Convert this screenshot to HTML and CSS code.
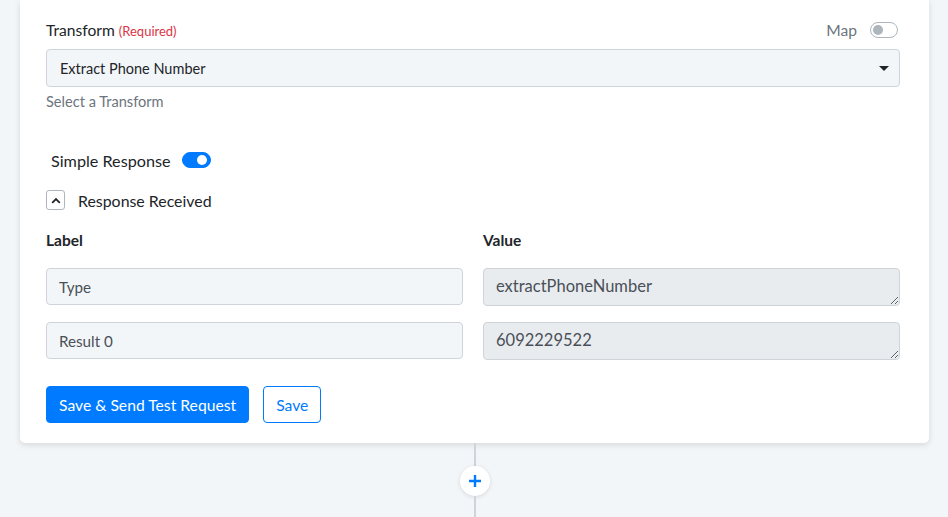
FILE: index.html
```html
<!DOCTYPE html>
<html lang="en">
<head>
    <meta charset="UTF-8">
    <meta name="viewport" content="width=device-width, initial-scale=1.0">
    <title>Transform Step</title>
    <link rel="stylesheet" href="styles.css">
</head>
<body>
    <div class="page">
        <div class="step-card">
            <div class="field-head">
                <label class="field-label">Transform <span class="required">(Required)</span></label>
                <div class="map-switch">
                    <span>Map</span>
                    <span class="toggle"></span>
                </div>
            </div>

            <div class="select-box">
                <span>Extract Phone Number</span>
                <span class="caret"></span>
            </div>
            <div class="help-text">Select a Transform</div>

            <div class="simple-row">
                <span>Simple Response</span>
                <span class="toggle on"></span>
            </div>

            <div class="collapse-row">
                <span class="collapse-btn">
                    <svg width="10" height="7" viewBox="0 0 10 7"><path d="M1.2 5.8 L5 2 L8.8 5.8" fill="none" stroke="#212529" stroke-width="1.8"/></svg>
                </span>
                <span>Response Received</span>
            </div>

            <div class="response-grid">
                <div class="col-title">Label</div>
                <div class="col-title">Value</div>

                <input class="cell" type="text" value="Type" readonly>
                <textarea class="cell value" rows="1" readonly>extractPhoneNumber</textarea>

                <input class="cell" type="text" value="Result 0" readonly>
                <textarea class="cell value" rows="1" readonly>6092229522</textarea>
            </div>

            <div class="actions">
                <button class="btn primary">Save &amp; Send Test Request</button>
                <button class="btn outline">Save</button>
            </div>
        </div>

        <div class="connector">
            <span class="line top"></span>
            <span class="add-step">
                <svg width="14" height="14" viewBox="0 0 14 14"><path d="M7 1 V13 M1 7 H13" stroke="#007bff" stroke-width="2.4"/></svg>
            </span>
            <span class="line"></span>
        </div>
    </div>
</body>
</html>
```

FILE: styles.css
```css
body {
    margin: 0;
    background-color: #f3f6f9;
    font-family: Lato, 'Open Sans', sans-serif;
    color: #212529;
}
.page {
    width: 909px;
    margin-left: 20px;
}
.step-card {
    background: white;
    padding: 20px 29px 20px 26px;
    border-radius: 0 0 5px 5px;
    box-shadow: 0 2px 6px rgba(0,0,0,0.12);
}
.field-head {
    display: flex;
    justify-content: space-between;
    align-items: center;
    height: 20px;
}
.field-label {
    font-size: 15.6px;
}
.required {
    color: #dc3545;
    font-size: 13px;
}
.map-switch {
    display: flex;
    align-items: center;
    gap: 13px;
    font-size: 15.6px;
    color: #6c757d;
    padding-right: 2px;
}
.toggle {
    position: relative;
    display: inline-block;
    width: 26px;
    height: 14px;
    border: 1px solid #adb5bd;
    border-radius: 8px;
    background: white;
}
.toggle::after {
    content: '';
    position: absolute;
    left: 2px;
    top: 2px;
    width: 10px;
    height: 10px;
    border-radius: 50%;
    background: #adb5bd;
}
.toggle.on {
    background: #007bff;
    border-color: #007bff;
    width: 27px;
}
.toggle.on::after {
    left: 14px;
    background: white;
}
.select-box {
    margin-top: 9px;
    height: 36px;
    display: flex;
    align-items: center;
    justify-content: space-between;
    padding: 0 13px;
    background: #f3f6f9;
    border: 1px solid #ced4da;
    border-radius: 4px;
    font-size: 14.5px;
}
.caret {
    width: 0;
    height: 0;
    border-left: 5px solid transparent;
    border-right: 5px solid transparent;
    border-top: 5px solid #212529;
    margin-right: -3px;
}
.help-text {
    margin-top: 7px;
    font-size: 14.6px;
    color: #6c757d;
    line-height: 16px;
}
.simple-row {
    margin-top: 40px;
    padding-left: 5px;
    display: flex;
    align-items: center;
    gap: 11px;
    font-size: 16.2px;
    height: 20px;
}
.collapse-row {
    margin-top: 20px;
    display: flex;
    align-items: center;
    gap: 13px;
    font-size: 15.9px;
    height: 20px;
}
.collapse-btn {
    width: 17px;
    height: 18px;
    border: 1px solid #adb5bd;
    border-radius: 3px;
    display: flex;
    align-items: center;
    justify-content: center;
}
.response-grid {
    margin-top: 20px;
    display: grid;
    grid-template-columns: 1fr 1fr;
    column-gap: 20px;
    row-gap: 16px;
}
.col-title {
    font-size: 15.5px;
    font-weight: bold;
    line-height: 20px;
    margin-bottom: 2px;
}
.cell {
    box-sizing: border-box;
    width: 100%;
    height: 37px;
    margin: 0;
    padding: 8px 12px;
    border: 1px solid #ced4da;
    border-radius: 4px;
    background: #f3f6f9;
    font-family: Lato, 'Open Sans', sans-serif;
    font-size: 15.2px;
    color: #495057;
    outline: none;
}
.cell.value {
    height: 38px;
    background: #e9ecef;
    line-height: 18px;
    resize: vertical;
    overflow: hidden;
    font-size: 16.5px;
}
.actions {
    margin-top: 26px;
    display: flex;
    gap: 14px;
}
.btn {
    height: 37px;
    padding: 0 12px;
    border-radius: 4px;
    font-family: Lato, 'Open Sans', sans-serif;
    font-size: 15.7px;
    cursor: pointer;
}
.btn.primary {
    background: #007bff;
    border: 1px solid #007bff;
    color: white;
}
.btn.outline {
    background: white;
    border: 1px solid #007bff;
    color: #007bff;
}
.connector {
    display: flex;
    flex-direction: column;
    align-items: center;
    height: 74px;
}
.line {
    width: 2px;
    flex-grow: 1;
    background: #ced4da;
}
.line.top {
    flex-grow: 0;
    height: 23px;
}
.add-step {
    width: 30px;
    height: 30px;
    border-radius: 50%;
    background: white;
    box-shadow: 0 1px 4px rgba(0,0,0,0.12);
    display: flex;
    align-items: center;
    justify-content: center;
}
```
